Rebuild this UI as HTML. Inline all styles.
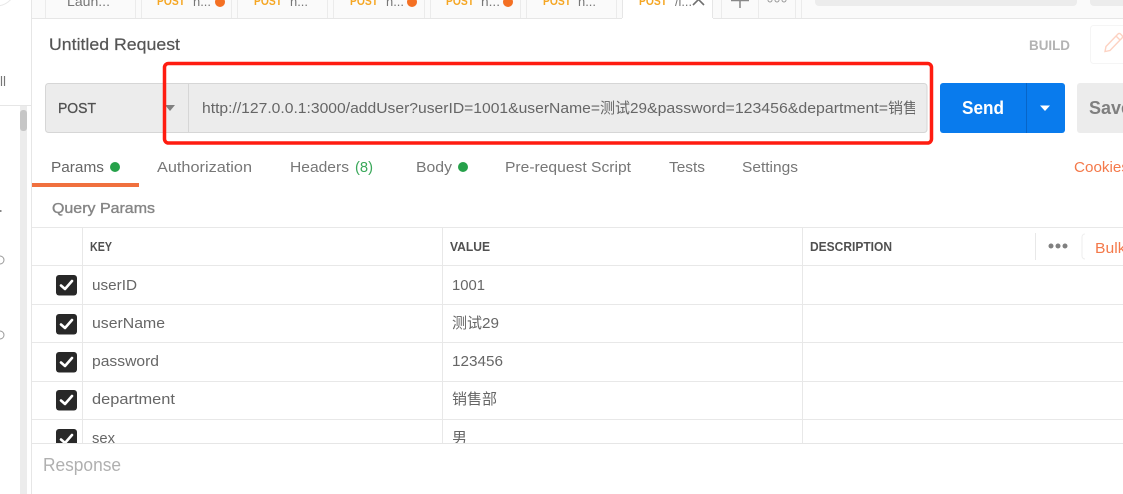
<!DOCTYPE html>
<html lang="zh-CN">
<head>
<meta charset="utf-8">
<title>Untitled Request</title>
<style>
html,body{margin:0;padding:0;background:#fff;width:1123px;height:494px;overflow:hidden}
svg{display:block}
text{font-family:"Liberation Sans","Noto Sans CJK SC",sans-serif;white-space:pre}
.t{font-size:14.5px;fill:#777}
.k{font-size:14.5px;fill:#666}
.h{font-size:12.5px;font-weight:bold;fill:#505050}
.o{font-size:11.5px;font-weight:bold;fill:#f5a623}
.g{font-size:13px;fill:#777}
.u{font-size:14.5px;fill:#666}
.c{fill:#282828}
.m{fill:none;stroke:#fff;stroke-width:2.6;stroke-linecap:round;stroke-linejoin:round}
</style>
</head>
<body>
<svg width="1123" height="494" viewBox="0 0 1123 494" xmlns="http://www.w3.org/2000/svg">
<defs>
<clipPath id="u"><rect x="190" y="84" width="725" height="48"/></clipPath>
<clipPath id="b"><rect x="0" y="0" width="1123" height="443"/></clipPath>
</defs>
<rect width="1123" height="494" fill="#fff"/>

<!-- sidebar -->
<circle cx="-4" cy="-14" r="20" fill="#fff" stroke="#e8e8e8"/>
<text x="0" y="86" font-size="14" fill="#777" textLength="6" lengthAdjust="spacingAndGlyphs">ll</text>
<rect x="0" y="105" width="31" height="1" fill="#e6e6e6"/>
<rect x="20" y="106" width="7" height="388" fill="#ececec"/>
<rect x="20" y="110" width="7" height="21" rx="3" fill="#c6c6c6"/>
<rect x="0" y="210" width="1.5" height="2" fill="#888"/>
<path d="M0 256a4 4 0 0 1 0 8" fill="none" stroke="#999" stroke-width="1"/>
<path d="M0 331a4 4 0 0 1 0 8" fill="none" stroke="#999" stroke-width="1"/>
<rect x="31" y="0" width="1" height="494" fill="#e6e6e6"/>

<!-- tab bar -->
<rect x="32" y="0" width="1091" height="18" fill="#fafafa"/>
<rect x="32" y="18" width="1091" height="1" fill="#e6e6e6"/>
<g fill="#ebebeb">
<rect x="45" y="0" width="1" height="18"/><rect x="135" y="0" width="1" height="18"/>
<rect x="141" y="0" width="1" height="18"/><rect x="231" y="0" width="1" height="18"/>
<rect x="237" y="0" width="1" height="18"/><rect x="327" y="0" width="1" height="18"/>
<rect x="333" y="0" width="1" height="18"/><rect x="424" y="0" width="1" height="18"/>
<rect x="430" y="0" width="1" height="18"/><rect x="520" y="0" width="1" height="18"/>
<rect x="526" y="0" width="1" height="18"/><rect x="616" y="0" width="1" height="18"/>
<rect x="721" y="0" width="1" height="18"/><rect x="758" y="0" width="1" height="18"/>
<rect x="795" y="0" width="1" height="18"/><rect x="801" y="0" width="1" height="18"/>
</g>
<rect x="622" y="0" width="91" height="19" fill="#fff"/>
<rect x="622" y="0" width="1" height="18" fill="#e6e6e6"/>
<rect x="712" y="0" width="1" height="18" fill="#e6e6e6"/>
<text x="67" y="6" font-size="13" fill="#777" textLength="43" lengthAdjust="spacingAndGlyphs">Laun...</text>
<text class="o" x="157" y="5" textLength="28" lengthAdjust="spacingAndGlyphs">POST</text>
<text class="g" x="193" y="6" textLength="18" lengthAdjust="spacingAndGlyphs">n...</text>
<circle cx="220" cy="2" r="5" fill="#f47023"/>
<text class="o" x="254" y="5" textLength="28" lengthAdjust="spacingAndGlyphs">POST</text>
<text class="g" x="290" y="6" textLength="18" lengthAdjust="spacingAndGlyphs">n...</text>
<text class="o" x="350" y="5" textLength="28" lengthAdjust="spacingAndGlyphs">POST</text>
<text class="g" x="386" y="6" textLength="18" lengthAdjust="spacingAndGlyphs">n...</text>
<circle cx="412" cy="2" r="5" fill="#f47023"/>
<text class="o" x="446" y="5" textLength="28" lengthAdjust="spacingAndGlyphs">POST</text>
<text class="g" x="481" y="6" textLength="19" lengthAdjust="spacingAndGlyphs">n...</text>
<circle cx="508" cy="2" r="5" fill="#f47023"/>
<text class="o" x="543" y="5" textLength="28" lengthAdjust="spacingAndGlyphs">POST</text>
<text class="g" x="578" y="6" textLength="18" lengthAdjust="spacingAndGlyphs">n...</text>
<text class="o" x="639" y="5" textLength="28" lengthAdjust="spacingAndGlyphs">POST</text>
<text class="g" x="675" y="6" textLength="17" lengthAdjust="spacingAndGlyphs">/l...</text>
<path d="M693 5L704 -6M693 -6L704 5" fill="none" stroke="#707070" stroke-width="1.6"/>
<path d="M740 -2V8M731 0.500H749" fill="none" stroke="#888" stroke-width="1.500"/>
<g fill="none" stroke="#999"><circle cx="770" cy="0" r="2"/><circle cx="777" cy="0" r="2"/><circle cx="784" cy="0" r="2"/></g>
<path d="M815 -5H1077V2a4 4 0 0 1-4 4H819a4 4 0 0 1-4-4Z" fill="#ececec"/>
<path d="M1090 -5H1123V6H1094a4 4 0 0 1-4-4Z" fill="#ececec"/>

<!-- title -->
<text x="49" y="50" font-size="16.5" fill="#555" stroke="#555" stroke-width="0.2" textLength="131" lengthAdjust="spacingAndGlyphs">Untitled Request</text>
<text x="1029" y="50" font-size="14" font-weight="bold" fill="#b3b3b3" textLength="41" lengthAdjust="spacingAndGlyphs">BUILD</text>
<rect x="1090.500" y="25.500" width="50" height="38" rx="3" fill="#fff" stroke="#f5f5f5"/>
<path d="M1105 51.500l1-5 12-12.500a1.800 1.800 0 0 1 2.500 0l1.500 1.500a1.800 1.800 0 0 1 0 2.500l-12 12.500z M1116 36l4 4" fill="none" stroke="#fdd2c2" stroke-width="1.400"/>

<!-- URL bar -->
<rect x="45.500" y="83.500" width="881.500" height="49" rx="3" fill="#ececec" stroke="#d6d6d6"/>
<rect x="188" y="84" width="1" height="48" fill="#d6d6d6"/>
<text x="58" y="113" font-size="14.500" fill="#505050" stroke="#505050" stroke-width="0.3" textLength="38" lengthAdjust="spacingAndGlyphs">POST</text>
<path d="M165 105h10l-5 6z" fill="#808080"/>
<g clip-path="url(#u)">
<text class="u" x="202" y="113" textLength="398" lengthAdjust="spacingAndGlyphs">http://127.0.0.1:3000/addUser?userID=1001&amp;userName=</text>
<text class="u" x="600" y="113" style="font-size:15px">测试</text>
<text class="u" x="630" y="113" textLength="17" lengthAdjust="spacingAndGlyphs">29</text>
<text class="u" x="647" y="113" textLength="241" lengthAdjust="spacingAndGlyphs">&amp;password=123456&amp;department=</text>
<text class="u" x="888" y="113" style="font-size:15px">销售</text>
</g>

<!-- Send -->
<rect x="940" y="83" width="125" height="50" rx="3" fill="#097bed"/>
<rect x="1026" y="83" width="1" height="50" fill="#0765c8"/>
<text x="962" y="114" font-size="18" font-weight="bold" fill="#fff" textLength="42" lengthAdjust="spacingAndGlyphs">Send</text>
<path d="M1040 105.500h10l-5 5.500z" fill="#fff"/>
<!-- Save -->
<path d="M1123 83H1080a3 3 0 0 0-3 3V130a3 3 0 0 0 3 3H1123Z" fill="#ececec"/>
<text x="1089" y="114" font-size="18" font-weight="bold" fill="#808080" textLength="42" lengthAdjust="spacingAndGlyphs">Save</text>

<!-- red annotation -->
<rect x="164.500" y="63.500" width="767" height="79.500" rx="4" fill="none" stroke="#ff1c10" stroke-width="3.500"/>

<!-- request tabs -->
<text class="t" x="51" y="172" textLength="53" lengthAdjust="spacingAndGlyphs" style="fill:#666">Params</text>
<circle cx="115" cy="167" r="5" fill="#26a14a"/>
<rect x="32" y="183" width="107" height="4" fill="#f0703e"/>
<text class="t" x="157" y="172" textLength="95" lengthAdjust="spacingAndGlyphs">Authorization</text>
<text class="t" x="290" y="172" textLength="59" lengthAdjust="spacingAndGlyphs">Headers</text>
<text class="t" x="355" y="172" textLength="18" lengthAdjust="spacingAndGlyphs" style="fill:#3aa85a">(8)</text>
<text class="t" x="416" y="172" textLength="36" lengthAdjust="spacingAndGlyphs">Body</text>
<circle cx="463" cy="167" r="5" fill="#26a14a"/>
<text class="t" x="505" y="172" textLength="126" lengthAdjust="spacingAndGlyphs">Pre-request Script</text>
<text class="t" x="669" y="172" textLength="36" lengthAdjust="spacingAndGlyphs">Tests</text>
<text class="t" x="742" y="172" textLength="56" lengthAdjust="spacingAndGlyphs">Settings</text>
<text class="t" x="1074" y="172" textLength="55" lengthAdjust="spacingAndGlyphs" style="fill:#f4794a">Cookies</text>

<text x="52" y="213" font-size="14.500" fill="#858585" stroke="#858585" stroke-width="0.35" textLength="103" lengthAdjust="spacingAndGlyphs">Query Params</text>

<!-- table -->
<g clip-path="url(#b)">
<g fill="#e8e8e8">
<rect x="32" y="227" width="1091" height="1"/>
<rect x="32" y="265" width="1091" height="1"/>
<rect x="32" y="304" width="1091" height="1"/>
<rect x="32" y="342" width="1091" height="1"/>
<rect x="32" y="381" width="1091" height="1"/>
<rect x="32" y="419" width="1091" height="1"/>
<rect x="82" y="228" width="1" height="215"/>
<rect x="442" y="228" width="1" height="215"/>
<rect x="802" y="228" width="1" height="215"/>
<rect x="1035" y="233" width="1" height="27"/>
</g>
<text class="h" x="90" y="251" textLength="22" lengthAdjust="spacingAndGlyphs">KEY</text>
<text class="h" x="450" y="251" textLength="40" lengthAdjust="spacingAndGlyphs">VALUE</text>
<text class="h" x="810" y="251" textLength="82" lengthAdjust="spacingAndGlyphs">DESCRIPTION</text>
<circle cx="1051" cy="246" r="2.500" fill="#808080"/><circle cx="1058" cy="246" r="2.500" fill="#808080"/><circle cx="1065" cy="246" r="2.500" fill="#808080"/>
<path d="M1085 234a3 3 0 0 0-3 3V256a3 3 0 0 0 3 3" fill="none" stroke="#eee"/>
<text x="1095" y="253" font-size="14.500" fill="#f4794a" textLength="62" lengthAdjust="spacingAndGlyphs">Bulk Edit</text>

<!-- rows -->
<rect class="c" x="56" y="275" width="21" height="20.500" rx="3"/><path class="m" d="M61 285.500l4 3.500 7-8"/>
<rect class="c" x="56" y="314" width="21" height="20.500" rx="3"/><path class="m" d="M61 324.500l4 3.500 7-8"/>
<rect class="c" x="56" y="352" width="21" height="20.500" rx="3"/><path class="m" d="M61 362.500l4 3.500 7-8"/>
<rect class="c" x="56" y="390" width="21" height="20.500" rx="3"/><path class="m" d="M61 400.500l4 3.500 7-8"/>
<rect class="c" x="56" y="429" width="21" height="20.500" rx="3"/><path class="m" d="M61 439.500l4 3.500 7-8"/>

<text class="k" x="92" y="290" textLength="45" lengthAdjust="spacingAndGlyphs">userID</text>
<text class="k" x="92" y="328" textLength="73" lengthAdjust="spacingAndGlyphs">userName</text>
<text class="k" x="92" y="366" textLength="67" lengthAdjust="spacingAndGlyphs">password</text>
<text class="k" x="92" y="404" textLength="83" lengthAdjust="spacingAndGlyphs">department</text>
<text class="k" x="92" y="443" textLength="23" lengthAdjust="spacingAndGlyphs">sex</text>

<text class="k" x="452" y="290" textLength="33" lengthAdjust="spacingAndGlyphs">1001</text>
<text class="k" x="452" y="328" style="font-size:15px">测试</text>
<text class="k" x="482" y="328" textLength="17" lengthAdjust="spacingAndGlyphs">29</text>
<text class="k" x="452" y="366" textLength="51" lengthAdjust="spacingAndGlyphs">123456</text>
<text class="k" x="452" y="404" style="font-size:15px">销售部</text>
<text class="k" x="452" y="443" style="font-size:15px">男</text>
</g>

<!-- response -->
<rect x="32" y="443" width="1091" height="1" fill="#e6e6e6"/>
<text x="43" y="471" font-size="18" fill="#b0b0b0" textLength="78" lengthAdjust="spacingAndGlyphs">Response</text>
</svg>
</body>
</html>
